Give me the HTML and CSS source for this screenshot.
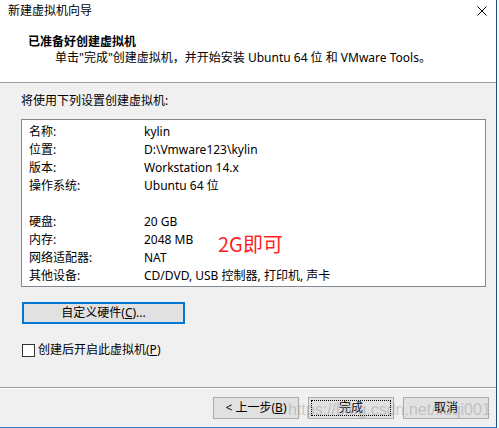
FILE: index.html
```html
<!DOCTYPE html>
<html lang="zh-CN">
<head>
<meta charset="utf-8">
<title>新建虚拟机向导</title>
<link rel="stylesheet" href="styles.css">
</head>
<body>
<div class="window">
  <div class="titlebar">
    <span class="title">新建虚拟机向导</span>
    <svg class="close" width="10" height="10" viewBox="0 0 10 10"><path d="M0.5 0.5 L9.5 9.5 M9.5 0.5 L0.5 9.5" stroke="#000" stroke-width="1" fill="none"/></svg>
  </div>
  <div class="header">
    <h1 class="head-title">已准备好创建虚拟机</h1>
    <p class="head-sub">单击"完成"创建虚拟机，并开始安装 Ubuntu 64 位 和 VMware Tools。</p>
  </div>
  <div class="content">
    <p class="intro">将使用下列设置创建虚拟机:</p>
    <div class="listbox">
      <span>名称:</span><span>kylin</span>
      <span>位置:</span><span>D:\Vmware123\kylin</span>
      <span>版本:</span><span>Workstation 14.x</span>
      <span>操作系统:</span><span>Ubuntu 64 位</span>
      <span></span><span></span>
      <span>硬盘:</span><span>20 GB</span>
      <span>内存:</span><span>2048 MB</span>
      <span>网络适配器:</span><span>NAT</span>
      <span>其他设备:</span><span>CD/DVD, USB 控制器, 打印机, 声卡</span>
    </div>
    <button class="custom">自定义硬件(<u>C</u>)...</button>
    <label class="check"><span class="box"></span><span>创建后开启此虚拟机(<u>P</u>)</span></label>
  </div>
  <div class="footer">
    <button class="btn">&lt; 上一步(<u>B</u>)</button>
    <button class="btn focus"><span class="focus-ring">完成</span></button>
    <button class="btn">取消</button>
  </div>
  <div class="note">2G即可</div>
  <div class="watermark">https://blog.csdn.net/liuqi001</div>
</div>
</body>
</html>
```

FILE: styles.css
```css
* { box-sizing: border-box; margin: 0; padding: 0; }
html, body { width: 499px; height: 428px; overflow: hidden; background: #fff; }
body {
  font-family: "Noto Sans", "Noto Sans CJK SC", sans-serif;
  font-size: 12px;
  line-height: 16px;
  color: #000;
}
.window {
  position: relative;
  width: 497px;
  height: 428px;
  border-right: 1px solid #1d4f8c;
  border-bottom: 1px solid #2b7cd3;
  display: flex;
  flex-direction: column;
  background: #f0f0f0;
}
.titlebar {
  height: 22px;
  background: #fff;
  display: flex;
  align-items: center;
  justify-content: space-between;
  padding: 0 9px 0 8px;
}
.close { display: block; }
.header {
  height: 61px;
  background: #fff;
  border-bottom: 1px solid #a0a0a0;
  padding-top: 12px;
}
.head-title { font-size: 12px; font-weight: bold; line-height: 16px; padding-left: 28px; }
.head-sub { padding-left: 55px; }
.content {
  height: 304px;
  padding: 10px 0 0 21px;
}
.listbox {
  margin-top: 10px;
  width: 465px;
  height: 168px;
  background: #fff;
  border: 1px solid #828790;
  padding: 3px 0 0 7px;
  display: grid;
  grid-template-columns: 115px 1fr;
  grid-auto-rows: 18px;
  align-items: center;
}
.custom {
  display: block;
  margin: 15px 0 0 1px;
  width: 163px;
  height: 22px;
  border: 2px solid #0078d7;
  background: #e1e1e1;
  font: inherit;
  color: #000;
}
.check {
  margin: 18px 0 0 1px;
  display: flex;
  align-items: center;
  gap: 3px;
}
.box {
  width: 13px;
  height: 13px;
  border: 1px solid #333;
  background: #fff;
}
.footer {
  height: 40px;
  border-top: 1px solid #a0a0a0;
  box-shadow: inset 0 1px #fff;
  padding: 9px 7px 0 0;
  display: flex;
  justify-content: flex-end;
  align-items: flex-start;
  gap: 9px;
}
.btn {
  width: 86px;
  height: 22px;
  border: 1px solid #adadad;
  background: #e1e1e1;
  font: inherit;
  color: #000;
  display: flex;
  align-items: center;
  justify-content: center;
}
.btn.focus { padding: 2px; }
.focus-ring {
  width: 100%;
  height: 100%;
  border: 1px dotted #000;
  display: flex;
  align-items: center;
  justify-content: center;
}
.note {
  position: absolute;
  left: 218px;
  top: 233px;
  font-family: "Noto Sans CJK SC", sans-serif;
  font-size: 20px;
  line-height: 22px;
  color: #ff1f1f;
}
.watermark {
  position: absolute;
  left: 288px;
  top: 401px;
  font-family: "Liberation Sans", sans-serif;
  font-size: 16px;
  line-height: 18px;
  color: rgba(150, 150, 150, 0.45);
  white-space: nowrap;
}
```
